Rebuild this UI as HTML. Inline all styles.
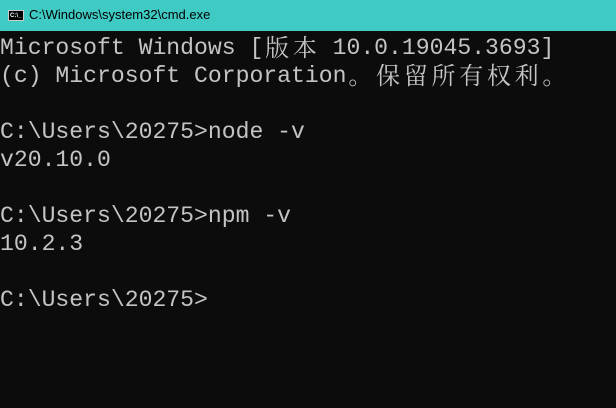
<!DOCTYPE html>
<html><head><style>
html,body{margin:0;padding:0;width:616px;height:408px;overflow:hidden;background:#0c0c0c}
.t{height:31px;background:#3fcac4;position:relative}
.t span{position:absolute;left:29px;top:7px;font:13px "Liberation Sans",sans-serif;color:#000}
.ic{position:absolute;left:8px;top:10px;width:16px;height:11px;background:#000;border:1px solid #ccc;box-sizing:border-box}
.ic i{position:absolute;left:1px;top:2px;font:bold 6px "Liberation Sans";color:#fff;font-style:normal}
pre{margin:0;padding:3px 0 0 0;font:23.1px/28px "Liberation Mono","Noto Serif CJK SC",monospace;color:#c4c4c4}
.l{display:block;height:28px;overflow:visible}
b{font-weight:normal;display:inline-block;width:27.72px;height:28px;line-height:28px;vertical-align:top;text-align:center;font-family:"Noto Serif CJK SC",serif;font-size:24px;position:relative;top:-2px}
</style></head><body>
<div class="t"><div class="ic"><i>C:\_</i></div><span>C:\Windows\system32\cmd.exe</span></div>
<pre><span class="l">Microsoft Windows [<b>版</b><b>本</b> 10.0.19045.3693]</span><span class="l">(c) Microsoft Corporation<b>。</b><b>保</b><b>留</b><b>所</b><b>有</b><b>权</b><b>利</b><b>。</b></span><span class="l"></span><span class="l">C:\Users\20275&gt;node -v</span><span class="l">v20.10.0</span><span class="l"></span><span class="l">C:\Users\20275&gt;npm -v</span><span class="l">10.2.3</span><span class="l"></span><span class="l">C:\Users\20275&gt;</span></pre>
</body></html>
